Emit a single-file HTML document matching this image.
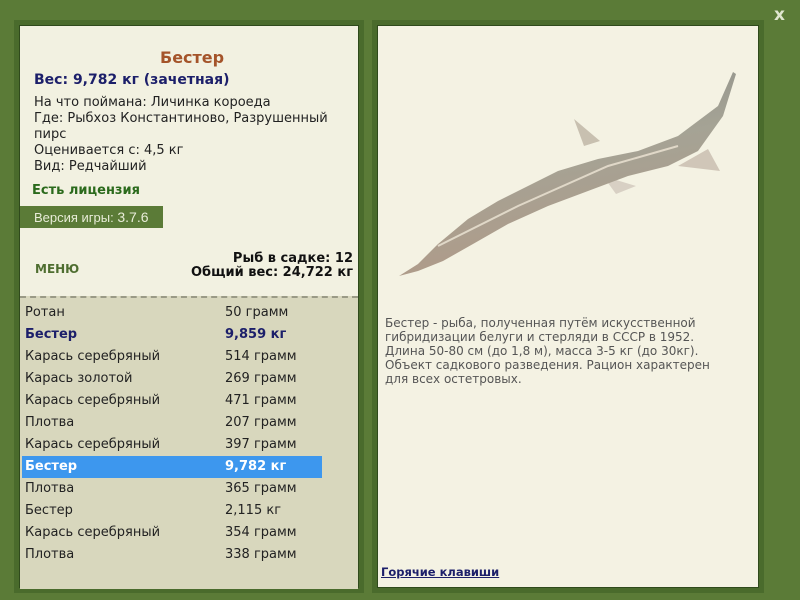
<!DOCTYPE html>
<html><head><meta charset="utf-8"><style>
body{margin:0;width:800px;height:600px;background:#5b7b37;position:relative;overflow:hidden;font-family:"DejaVu Sans","Liberation Sans",sans-serif;font-size:13px;color:#222}
.box{position:absolute;border:1px solid #2f4a1c;box-shadow:0 0 0 5px #4a6b2c;}
#L{left:19px;top:25px;width:338px;height:561px;background:#f2f1e1}
#R{left:377px;top:25px;width:380px;height:561px;background:#f4f2e3}
.t{position:absolute;white-space:nowrap}
#low{position:absolute;left:0;top:270px;width:338px;height:291px;background:#d8d7bd;border-top:2px dashed #9a9a86}
.row{position:absolute;left:2px;width:300px;height:22px;line-height:22px}
.row span{position:absolute}
.row .a{left:3px}.row .b{left:203px}
</style></head><body>
<div class="box" id="L">
 <div class="t" style="left:140px;top:22px;font-size:16px;font-weight:bold;color:#a4542a">Бестер</div>
 <div class="t" style="left:14px;top:46px;font-size:14px;font-weight:bold;color:#1c1f6a">Вес: 9,782 кг (зачетная)</div>
 <div class="t" style="left:14px;top:69px;line-height:16px">На что поймана: Личинка короеда<br>Где: Рыбхоз Константиново, Разрушенный<br>пирс<br>Оценивается с: 4,5 кг<br>Вид: Редчайший</div>
 <div class="t" style="left:12px;top:157px;font-weight:bold;color:#2b6a1c;font-size:13px">Есть лицензия</div>
 <div class="t" style="left:0;top:180px;width:143px;height:22px;background:#5b7b37;color:#e8ecd8;line-height:22px;padding-left:14px;box-sizing:border-box;font-family:'Liberation Sans',sans-serif;font-size:13px">Версия игры: <b style="font-weight:normal;font-size:14px">3.7.6</b></div>
 <div class="t" style="left:15px;top:236px;font-weight:900;color:#4f6e30;font-size:12px">МЕНЮ</div>
 <div class="t" style="right:5px;top:226px;text-align:right;font-weight:bold;color:#111;line-height:14px">Рыб в садке: 12<br>Общий вес: 24,722 кг</div>
 <div id="low">
  <div class="row" style="top:4px"><span class="a">Ротан</span><span class="b">50 грамм</span></div>
  <div class="row" style="top:26px;font-weight:bold;color:#1c1f6a"><span class="a">Бестер</span><span class="b">9,859 кг</span></div>
  <div class="row" style="top:48px"><span class="a">Карась серебряный</span><span class="b">514 грамм</span></div>
  <div class="row" style="top:70px"><span class="a">Карась золотой</span><span class="b">269 грамм</span></div>
  <div class="row" style="top:92px"><span class="a">Карась серебряный</span><span class="b">471 грамм</span></div>
  <div class="row" style="top:114px"><span class="a">Плотва</span><span class="b">207 грамм</span></div>
  <div class="row" style="top:136px"><span class="a">Карась серебряный</span><span class="b">397 грамм</span></div>
  <div class="row" style="top:158px;background:#3d97ee;color:#fff;font-weight:bold"><span class="a">Бестер</span><span class="b">9,782 кг</span></div>
  <div class="row" style="top:180px"><span class="a">Плотва</span><span class="b">365 грамм</span></div>
  <div class="row" style="top:202px"><span class="a">Бестер</span><span class="b">2,115 кг</span></div>
  <div class="row" style="top:224px"><span class="a">Карась серебряный</span><span class="b">354 грамм</span></div>
  <div class="row" style="top:246px"><span class="a">Плотва</span><span class="b">338 грамм</span></div>
 </div>
</div>
<div class="box" id="R">
 <svg width="380" height="280" style="position:absolute;left:0;top:0">
  <defs><linearGradient id="g" x1="0" y1="0" x2="0.3" y2="1"><stop offset="0" stop-color="#8a8d88"/><stop offset="0.5" stop-color="#a5a395"/><stop offset="1" stop-color="#b09a88"/></linearGradient></defs>
  <path d="M196,93 L206,120 L222,115 Z" fill="#c8c0b0"/>
  <path d="M330,123 L342,145 L300,140 Z" fill="#d0c6b8"/>
  <path d="M225,150 L238,168 L258,160 Z" fill="#d8d0c4"/>
  <path d="M21,250 L40,238 L60,218 L90,193 L120,175 L150,160 L180,145 L220,133 L260,125 L300,110 L340,80 L355,46 L358,48 L345,90 L320,125 L290,140 L250,150 L210,165 L170,180 L130,198 L95,218 L65,235 L40,245 Z" fill="url(#g)"/>
  <path d="M60,220 L140,180 L230,140 L300,120" stroke="#e0d8c8" stroke-width="2" fill="none"/>
 </svg>
 <div class="t" style="left:7px;top:290px;line-height:14px;color:#555;font-size:12px">Бестер - рыба, полученная путём искусственной<br>гибридизации белуги и стерляди в СССР в 1952.<br>Длина 50-80 см (до 1,8 м), масса 3-5 кг (до 30кг).<br>Объект садкового разведения. Рацион характерен<br>для всех остетровых.</div>
 <div class="t" style="left:3px;top:539px;font-weight:bold;color:#1c1f6a;text-decoration:underline;font-size:11.5px">Горячие клавиши</div>
</div>
<div class="t" style="left:774px;top:5px;font-size:17px;font-weight:900;color:#dfe6cf">x</div>
</body></html>
